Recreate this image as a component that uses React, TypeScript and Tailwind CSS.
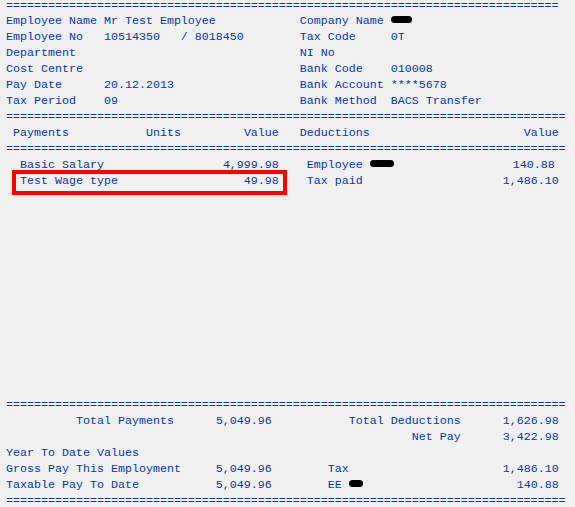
import type { ReactNode } from "react";

type Seg = { col: number; text?: string; end?: boolean; blob?: number };

const Blob = ({ w }: { w: number }) => (
    <span className="inline-block align-middle h-[7px] bg-black rounded-full -mt-[2px]" style={{ width: w }} />
);

// builds a fixed-column line, one char = 7px
const line = (segs: Seg[]): ReactNode[] => {
    const out: ReactNode[] = [];
    let pos = 0;
    segs.forEach((s, i) => {
        const len = s.blob ? Math.ceil(s.blob / 7) : (s.text ?? "").length;
        const start = s.end ? s.col - len + 1 : s.col;
        if (start > pos) out.push(" ".repeat(start - pos));
        if (s.blob) {
            out.push(<Blob key={i} w={s.blob} />);
        } else {
            out.push(s.text);
        }
        pos = start + len;
    });
    return out;
};

const sep = (n: number) => "=".repeat(n);

const rows: ReactNode[][] = [
    line([{ col: 0, text: "Employee Name Mr Test Employee" }, { col: 42, text: "Company Name" }, { col: 55, blob: 21 }]),
    line([{ col: 0, text: "Employee No   10514350   / 8018450" }, { col: 42, text: "Tax Code     0T" }]),
    line([{ col: 0, text: "Department" }, { col: 42, text: "NI No" }]),
    line([{ col: 0, text: "Cost Centre" }, { col: 42, text: "Bank Code    010008" }]),
    line([{ col: 0, text: "Pay Date      20.12.2013" }, { col: 42, text: "Bank Account ****5678" }]),
    line([{ col: 0, text: "Tax Period    09" }, { col: 42, text: "Bank Method  BACS Transfer" }]),
    [sep(80)],
    line([
        { col: 1, text: "Payments" },
        { col: 20, text: "Units" },
        { col: 38, text: "Value", end: true },
        { col: 42, text: "Deductions" },
        { col: 78, text: "Value", end: true },
    ]),
    [sep(80)],
    line([
        { col: 2, text: "Basic Salary" },
        { col: 38, text: "4,999.98", end: true },
        { col: 43, text: "Employee " },
        { col: 52, blob: 24 },
        { col: 78, text: "140.88", end: true },
    ]),
    line([
        { col: 2, text: "Test Wage type" },
        { col: 38, text: "49.98", end: true },
        { col: 43, text: "Tax paid" },
        { col: 78, text: "1,486.10", end: true },
    ]),
    ...Array.from({ length: 13 }, () => [""]),
    [sep(80)],
    line([
        { col: 10, text: "Total Payments" },
        { col: 37, text: "5,049.96", end: true },
        { col: 64, text: "Total Deductions", end: true },
        { col: 78, text: "1,626.98", end: true },
    ]),
    line([
        { col: 64, text: "Net Pay", end: true },
        { col: 78, text: "3,422.98", end: true },
    ]),
    line([{ col: 0, text: "Year To Date Values" }]),
    line([
        { col: 0, text: "Gross Pay This Employment" },
        { col: 37, text: "5,049.96", end: true },
        { col: 46, text: "Tax" },
        { col: 78, text: "1,486.10", end: true },
    ]),
    line([
        { col: 0, text: "Taxable Pay To Date" },
        { col: 37, text: "5,049.96", end: true },
        { col: 46, text: "EE " },
        { col: 49, blob: 14 },
        { col: 78, text: "140.88", end: true },
    ]),
    [sep(80)],
];

const App = () => {
    return (
        <div className="w-[575px] h-[507px] bg-[#f0f0f0] overflow-hidden">
            <div className="relative pl-[6px] font-['Liberation_Mono','Courier_New',monospace] text-[11.67px] leading-[16px] text-[#0836a6]">
                <div className="h-[13px] leading-[13px] whitespace-pre">{sep(79)}</div>
                {rows.map((r, i) => (
                    <div key={i} className="h-[16px] whitespace-pre">
                        {r}
                    </div>
                ))}
                <div className="absolute left-[12px] top-[170px] w-[275px] h-[25px] border-4 border-[#ff0000]" />
            </div>
        </div>
    );
};

export default App;
